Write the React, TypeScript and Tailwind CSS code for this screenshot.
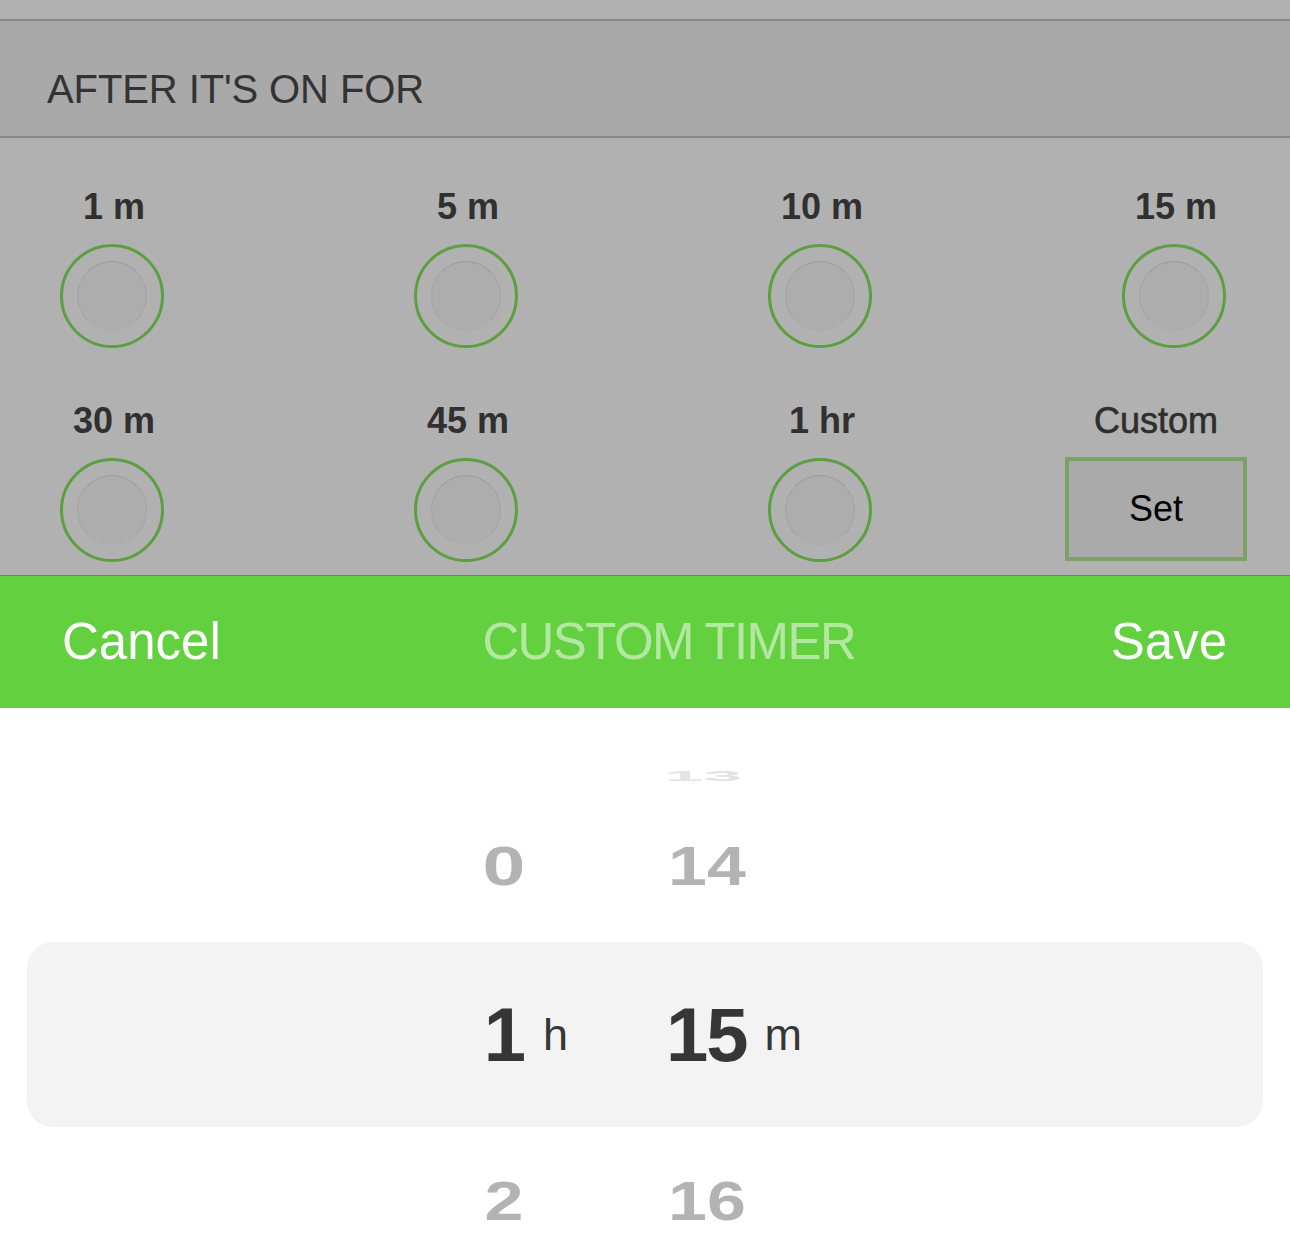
import React from "react";

const font = { fontFamily: '"Liberation Sans", Arial, sans-serif' };

function Radio() {
  return (
    <div className="w-[104px] h-[104px] rounded-full border-[3px] border-[#5c9f40] flex items-center justify-center">
      <div className="w-[70px] h-[70px] rounded-full bg-[#adadad] border border-[#9a9a9a] border-b-[#acacac] border-l-[#a4a4a4] border-r-[#a4a4a4]" />
    </div>
  );
}

function Option({ label }: { label: string }) {
  return (
    <div className="flex flex-col items-center pl-[4px]">
      <div className="h-[44px] leading-[44px] text-[36px] font-bold text-[#303030]">{label}</div>
      <div className="mt-[15px] -ml-[4px]">
        <Radio />
      </div>
    </div>
  );
}

export default function App() {
  return (
    <div className="w-[1290px] h-[1255px] overflow-hidden bg-white flex flex-col" style={font}>
      <div className="h-[19px] bg-[#b1b1b1]" />
      <div className="h-[2px] bg-[#878787]" />
      <div className="h-[115px] bg-[#a9a9a9] flex items-center pl-[47px] pt-[20px]">
        <span className="text-[40px] text-[#333333] tracking-[-0.1px]">AFTER IT'S ON FOR</span>
      </div>
      <div className="h-[2px] bg-[#878787]" />
      <div className="h-[437px] bg-[#b1b1b1] pt-[47px] pl-[12px]">
        <div className="grid grid-cols-[repeat(4,200px)] gap-x-[154px] gap-y-[51px]">
          <Option label="1 m" />
          <Option label="5 m" />
          <Option label="10 m" />
          <Option label="15 m" />
          <Option label="30 m" />
          <Option label="45 m" />
          <Option label="1 hr" />
          <div className="flex flex-col items-center pr-[36px]">
            <div className="h-[44px] leading-[44px] text-[36px] text-[#2e2e2e] [-webkit-text-stroke:0.6px_#2e2e2e]">Custom</div>
            <div className="mt-[14px] w-[182px] h-[104px] border-[4px] border-[#7ba264] bg-[#aaaaaa] flex items-center justify-center">
              <span className="text-[36px] text-black">Set</span>
            </div>
          </div>
        </div>
      </div>
      <div className="h-[1px] bg-[#7a7a7a]" />
      <div className="h-[132px] bg-[#63d03f] flex items-center justify-between pl-[62px] pr-[63px]">
        <span className="text-[51px] text-white">Cancel</span>
        <span className="text-[51px] text-[#b4e8a2] tracking-[-1.6px] ml-[6px]">CUSTOM TIMER</span>
        <span className="text-[51px] text-white">Save</span>
      </div>
      <div className="flex-1 bg-white flex flex-col">
        <div className="mt-[48px] h-[40px] flex items-center pl-[664px]">
          <span className="text-[70px] font-bold text-[#e3e3e3] scale-y-[0.2] leading-none">13</span>
        </div>
        <div className="mt-[30px] h-[80px] flex items-center pl-[464px]">
          <span className="w-[80px] text-center text-[70px] font-bold text-[#b3b3b3] scale-y-[0.8] scale-x-[1.1] leading-none">0</span>
          <span className="w-[124px]" />
          <span className="text-[70px] font-bold text-[#b3b3b3] scale-y-[0.8] leading-none">14</span>
        </div>
        <div className="mt-[36px] mx-[27px] h-[185px] rounded-[26px] bg-[#f3f3f3] flex items-center pl-[438px]">
          <span className="w-[80px] text-center text-[76px] font-bold text-[#363636] leading-none">1</span>
          <span className="w-[123px] text-[45px] text-[#363636] leading-none -ml-[2px]">h</span>
          <span className="text-[76px] font-bold text-[#363636] leading-none tracking-[-2px]">15</span>
          <span className="ml-[18px] text-[45px] text-[#363636] leading-none">m</span>
        </div>
        <div className="mt-[34px] h-[80px] flex items-center pl-[464px]">
          <span className="w-[80px] text-center text-[70px] font-bold text-[#b3b3b3] scale-y-[0.8] leading-none">2</span>
          <span className="w-[124px]" />
          <span className="text-[70px] font-bold text-[#b3b3b3] scale-y-[0.8] leading-none">16</span>
        </div>
      </div>
    </div>
  );
}
